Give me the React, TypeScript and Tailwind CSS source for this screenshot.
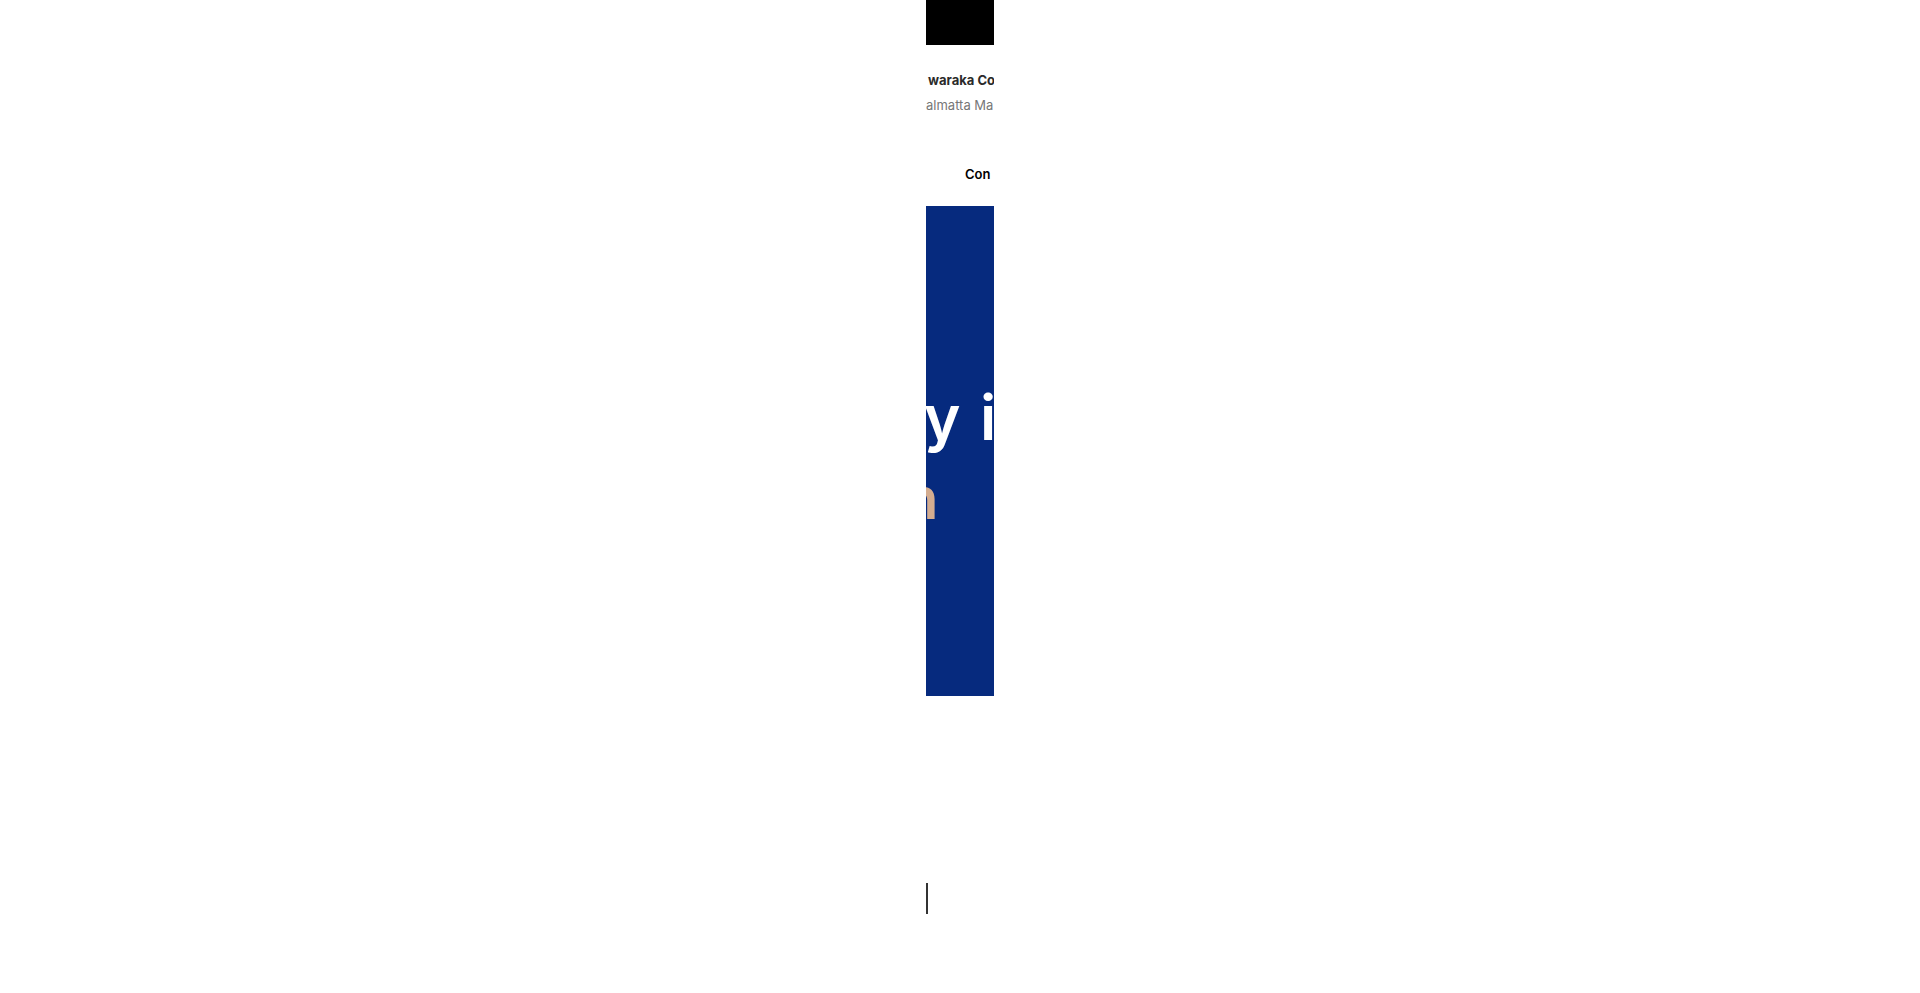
export default function App() {
  return (
    <div className="min-h-screen bg-white" style={{ fontFamily: 'Inter, "Noto Sans", sans-serif' }}>
      <div className="ml-[926px] w-[68px] overflow-hidden">
        <div className="h-[45px] bg-black" />

        <div className="mt-[26px] whitespace-nowrap">
          <p className="ml-[2px] text-[13px] font-bold leading-[18px] text-[#2a2a2a]">waraka Co</p>
          <p className="mt-[7px] ml-[0px] text-[13px] leading-[18px] text-[#777]">almatta Ma</p>
        </div>

        <nav className="mt-[50px] flex whitespace-nowrap pl-[39px] text-[13px] font-semibold leading-[20px] text-black">
          <span>Con</span>
        </nav>

        <section className="mt-[22px] h-[490px] bg-[#062a7e] pt-[176px]">
          <div className="ml-[-2px] whitespace-nowrap text-[62px] font-semibold leading-[72px] text-white [word-spacing:4px]">
            y i
          </div>
          <div className="mt-[11px] ml-[-23px] whitespace-nowrap text-[58px] font-semibold leading-[66px] text-[#d4ad90]">
            n
          </div>
        </section>

        <div className="mt-[187px] h-[31px] w-[2px] bg-[#333]" />
      </div>
    </div>
  )
}
